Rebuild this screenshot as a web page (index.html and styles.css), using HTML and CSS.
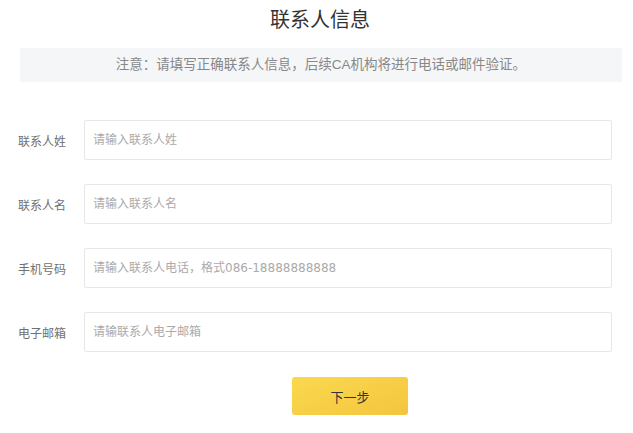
FILE: index.html
```html
<!DOCTYPE html>
<html lang="zh-CN">
<head>
    <meta charset="UTF-8">
    <meta name="viewport" content="width=device-width, initial-scale=1.0">
    <title>联系人信息</title>
    <link rel="stylesheet" href="styles.css">
</head>
<body>

    <div class="page">
        <div class="title">联系人信息</div>
        <div class="notice">注意：请填写正确联系人信息，后续CA机构将进行电话或邮件验证。</div>

        <form class="contact-form" id="contact-form">
            <div class="form-row">
                <label for="last-name">联系人姓</label>
                <input type="text" id="last-name" placeholder="请输入联系人姓">
            </div>
            <div class="form-row">
                <label for="first-name">联系人名</label>
                <input type="text" id="first-name" placeholder="请输入联系人名">
            </div>
            <div class="form-row">
                <label for="phone">手机号码</label>
                <input type="text" id="phone" placeholder="请输入联系人电话，格式086-18888888888">
            </div>
            <div class="form-row">
                <label for="email">电子邮箱</label>
                <input type="text" id="email" placeholder="请输联系人电子邮箱">
            </div>
            <div class="form-actions">
                <button type="submit" class="btn-next">下一步</button>
            </div>
        </form>
    </div>

</body>
</html>
```

FILE: styles.css
```css
* {
    box-sizing: border-box;
    margin: 0;
    padding: 0;
    font-family: "Liberation Sans", "Noto Sans CJK SC", sans-serif;
}

body {
    background: #fff;
    color: #333;
}

.page {
    width: 633px;
    padding: 6px 11px 0 18px;
}

.title {
    font-size: 20px;
    line-height: 28px;
    text-align: center;
    color: #333;
}

.notice {
    margin: 14px 0 0 2px;
    height: 34px;
    line-height: 34px;
    background: #f5f6f8;
    text-align: center;
    font-size: 13.5px;
    color: #888;
}

.contact-form {
    margin-top: 38px;
    padding-right: 10px;
}

.form-row {
    display: flex;
    align-items: center;
    height: 40px;
    margin-bottom: 24px;
}

.form-row label {
    width: 66px;
    font-size: 12px;
    color: #707070;
}

.form-row input {
    flex: 1;
    height: 40px;
    padding: 0 8px;
    border: 1px solid #e6e6e6;
    border-radius: 2px;
    font-family: "DejaVu Sans", "Noto Sans CJK SC", sans-serif;
    font-size: 12px;
    color: #333;
    outline: none;
}

.form-row input::placeholder {
    color: #aaa;
}

.form-actions {
    display: flex;
    justify-content: center;
    padding: 1px 0 0 70px;
}

.btn-next {
    width: 116px;
    height: 38px;
    border: none;
    border-radius: 3px;
    background: linear-gradient(160deg, #fad94e, #f4c53f);
    color: #333;
    font-size: 13px;
    cursor: pointer;
}
```
